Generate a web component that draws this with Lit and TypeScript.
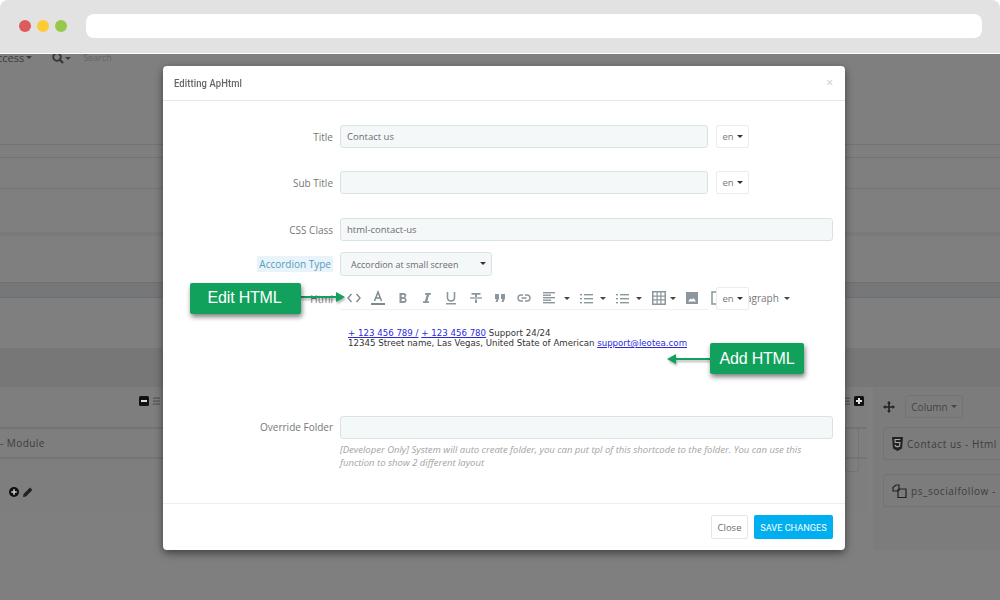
import { LitElement, html, css, svg } from "lit";
import { customElement } from "lit/decorators.js";

const ic = (w: number, h: number, body: unknown, cls = "") =>
  html`<svg class=${cls} width=${w} height=${h} viewBox="0 0 ${w} ${h}">${body}</svg>`;

const caret = html`<i class="caret"></i>`;

const tools = [
  ic(14, 12, svg`<path d="M4.500 2 1 6l3.500 4M9.500 2 13 6l-3.500 4" fill="none" stroke="#7d8a90" stroke-width="1.400"/>`),
  ic(16, 16, svg`<path d="M4.500 11 8 2l3.500 9M5.800 8h4.400" fill="none" stroke="#7d8a90" stroke-width="1.500"/><rect x="1" y="13" width="14" height="2" fill="#7d8a90"/>`),
  ic(10, 12, svg`<path d="M1.500 1H6c3 0 3 4.400.6 4.800C9.500 6 9.500 11 6 11H1.500zM3.700 3v2h2c1 0 1-2 0-2zM3.700 7v2h2.300c1.200 0 1.200-2 0-2z" fill="#8b979c" fill-rule="evenodd"/>`),
  ic(10, 12, svg`<path d="M3 1h6v1.800H7.200L5.300 9.200H7V11H1V9.200h1.800l1.900-6.400H3z" fill="#8b979c"/>`),
  ic(12, 14, svg`<path d="M2.500 1v5.500c0 4.500 7 4.500 7 0V1" fill="none" stroke="#8b979c" stroke-width="1.600"/><rect x="1" y="12" width="10" height="1.500" fill="#8b979c"/>`),
  ic(14, 12, svg`<path d="M1 6h12" stroke="#8b979c" stroke-width="1.300"/><path d="M2.500 1h9v1.800H8V5H6V2.800H2.500zM6 7.500h2V11H6z" fill="#8b979c"/>`),
  ic(12, 10, svg`<path d="M1 1h4v4.500L3.500 9H1.500l1-3H1zM7 1h4v4.500L9.500 9h-2l1-3H7z" fill="#8b979c"/>`),
  ic(14, 10, svg`<path d="M6 2H4a3 3 0 0 0 0 6h2M8 2h2a3 3 0 0 1 0 6H8M4.500 5h5" fill="none" stroke="#8b979c" stroke-width="1.400"/>`),
];

const lines = (xs: number[]) =>
  ic(12, 12, svg`${xs.map((w, i) => svg`<rect x="0" y=${i * 2.5} width=${w} height="1.400" fill="#8b979c"/>`)}`);

const listIcon = (x: number) =>
  ic(13, 11, svg`${[1, 5, 9].map((y) => svg`<rect x="0" y=${y} width="2" height="1.400" fill="#8b979c"/><rect x=${x} y=${y} width=${13 - x} height="1.400" fill="#8b979c"/>`)}`);

const grip = ic(7, 9, svg`${[0.5, 3.5, 6.5].map((y) => svg`<rect x="0" y=${y} width="7" height="1.200" fill="#555"/>`)}`);

@customElement("app-root")
export class AppRoot extends LitElement {
  static styles = css`
    :host {
      display: block;
      position: relative;
      width: 1000px;
      height: 600px;
      overflow: hidden;
      background: #ffffff;
      font-family: "Open Sans", "Liberation Sans", sans-serif;
    }
    .chrome {
      height: 53px;
      background: #e2e2e2;
      border-radius: 8px 8px 0 0;
      display: flex;
      align-items: center;
      padding: 0 18px 1px 19px;
      box-sizing: border-box;
      gap: 6px;
    }
    .dot { width: 12px; height: 12px; border-radius: 50%; }
    .red { background: #df5a5c; }
    .yellow { background: #fdcb33; }
    .green { background: #96c94b; }
    .url { flex: 1; height: 24px; background: #fff; border-radius: 8px; margin-left: 13px; }
    .page {
      margin-top: 1px;
      height: 546px;
      background: #7f7f7f;
      color: #3c3c3c;
      display: flex;
      flex-direction: column;
    }
    .nav {
      height: 90px;
      flex: none;
      display: flex;
      align-items: flex-start;
      font-size: 10px;
      box-sizing: border-box;
      overflow: hidden;
      white-space: nowrap;
    }
    .nav-access { margin: -3px 0 0 -10px; font-size: 11px; line-height: 13px; height: 13px; display: flex; align-items: center; gap: 2px; flex: none; }
    .nav-search { margin-left: 20px; display: flex; align-items: center; gap: 1px; height: 8px; flex: none; }
    .nav-text { margin-left: 12px; color: #666; line-height: 7px; font-size: 9px; }
    .caret {
      display: inline-block;
      width: 0; height: 0;
      border-left: 3.5px solid transparent;
      border-right: 3.5px solid transparent;
      border-top: 3.5px solid currentColor;
      flex: none;
    }
    .band { flex: none; border-top: 1px solid #737373; box-sizing: border-box; }
    .b1 { height: 13px; }
    .b2 { height: 31px; }
    .b3 { height: 44px; border-top-width: 1px; }
    .b4 { height: 50px; border-top: 4px solid #7a7a7a; }
    .b5 { height: 16px; background: #767779; border-top: 1px solid #707070; border-bottom: 1px solid #707070; }
    .b6 { height: 50px; border-top: none; }
    .b7 { height: 39px; background: #777777; border-top: none; }
    .builder {
      height: 163px;
      flex: none;
      display: flex;
      justify-content: space-between;
    }
    .left { width: 867px; height: 126px; box-sizing: border-box; background: #7e7e7e; display: flex; flex-direction: column; }
    .left-top { height: 40px; flex: none; display: flex; align-items: flex-end; padding: 0 3px 21px 139px; gap: 4px; box-sizing: border-box; }
    .spacer { flex: 1; }
    .mod {
      height: 32px; flex: none;
      border-top: 2px solid #747474; border-bottom: 2px solid #747474;
      box-sizing: border-box;
      font-size: 10px;
      display: flex; align-items: center;
      letter-spacing: .45px;
      justify-content: space-between;
    }
    .mod-side { width: 14px; height: 44px; align-self: flex-start; margin-top: -1px; border: 1px solid #747474; border-radius: 2px; box-sizing: border-box; margin-right: 8px; }
    .mod-tools { display: flex; gap: 4px; margin: 28px 0 0 9px; align-items: center; }
    .right {
      width: 127px;
      background: #7c7c7c;
      box-sizing: border-box;
      padding: 8px 0 0 10px;
    }
    .right-top { display: flex; align-items: center; gap: 10px; }
    .col-btn {
      width: 58px; height: 23px; box-sizing: border-box;
      border: 1px solid #737373; border-radius: 3px;
      font-size: 10px; color: #444;
      display: flex; align-items: center; justify-content: center; gap: 3px;
    }
    .card {
      height: 33px; width: 140px;
      margin-top: 9px;
      box-sizing: border-box;
      border: 1px solid #737373; border-radius: 3px;
      display: flex; align-items: center; gap: 4px;
      padding-left: 8px;
      font-size: 10px; letter-spacing: .55px;
      white-space: nowrap;
    }
    .card + .card { margin-top: 14px; }
    .bottom { flex: 1; }

    .modal {
      position: absolute;
      left: 163px; top: 66px;
      width: 682px; height: 484px;
      background: #fff;
      border-radius: 4px;
      box-shadow: 0 3px 9px rgba(0,0,0,.5);
      display: flex;
      flex-direction: column;
      color: #6c6c6c;
    }
    .head {
      height: 35px; flex: none;
      box-sizing: border-box;
      border-bottom: 1px solid #e8e8e8;
      display: flex; align-items: center; justify-content: space-between;
      padding: 0 12px 0 11px;
    }
    .head h4 { margin: 0; font: 500 11px Roboto, sans-serif; color: #666; letter-spacing: .1px; transform: scaleX(.86); transform-origin: left center; }
    .x { font-size: 12px; color: #c8c8c8; line-height: 1; }
    .body { flex: 1; padding-top: 24px; }
    .row {
      display: grid;
      grid-template-columns: 170px 1fr;
      column-gap: 7px;
      padding-right: 12px;
      align-items: center;
      position: relative;
    }
    .lab { text-align: right; font-size: 10px; color: #777; }
    .lab mark { background: #e8f4f9; color: #5b9bbd; padding: 1px 2px; }
    .inp {
      height: 23px; box-sizing: border-box;
      background: #f5f8f9;
      border: 1px solid #d8e3e6;
      border-radius: 3px;
      font-size: 9.5px; color: #6c6c6c;
      padding: 0 6px;
      display: flex; align-items: center;
    }
    .short { display: flex; gap: 8px; }
    .short .inp { width: 368px; flex: none; }
    .en {
      width: 33px; height: 23px; box-sizing: border-box;
      border: 1px solid #ececec; border-radius: 2px; background: #fff;
      font-size: 9.5px; color: #777;
      display: flex; align-items: center; justify-content: center; gap: 3px;
      flex: none;
    }
    .en .caret { color: #333; }
    .r2 { margin-top: 23px; }
    .r3 { margin-top: 24px; }
    .r4 { margin-top: 11px; }
    .sel { width: 152px; height: 24px; justify-content: space-between; padding-left: 10px; padding-right: 5px; font-size: 9px; }
    .sel .caret { color: #333; transform: translateY(-1px); }
    .r5 { margin-top: 11px; }
    .bar {
      height: 23px; width: 368px; box-sizing: border-box;
      border-bottom: 1px solid #f0f0f0;
      display: flex; align-items: center;
      font-size: 10px; color: #777;
      white-space: nowrap;
      padding-left: 2px;
    }
    .t { width: 24.3px; flex: none; display: flex; align-items: center; justify-content: center; }
    .t.w { width: 36.3px; justify-content: space-between; padding-right: 10px; box-sizing: border-box; }
    .t.first { margin-left: 7px; }
    .t.tbl { width: 28px; padding-right: 4px; }
    .t .caret { color: #444; }
    .para { display: flex; align-items: center; gap: 5px; width: 61px; justify-content: flex-end; flex: none; }
    .para .caret { color: #444; }
    .en-over { position: absolute; left: 553px; top: 0; }
    .content { margin-left: 185px; margin-top: 18px; font: 8.65px/10px "DejaVu Sans", sans-serif; color: #333; height: 88px; white-space: nowrap; }
    .content a { color: #2a2ae0; text-decoration: underline; }
    .r6 { align-items: start; }
    .r6 .lab { line-height: 23px; }
    .help { font-size: 9.5px; font-style: italic; color: #a3a3a3; line-height: 13px; margin-top: 4px; padding-right: 10px; }
    .foot {
      height: 47px; flex: none;
      box-sizing: border-box;
      border-top: 1px solid #eee;
      display: flex; justify-content: flex-end; align-items: flex-start;
      gap: 6px; padding: 11px 12px 0 0;
    }
    .btn {
      height: 24px; box-sizing: border-box; border-radius: 2px;
      font: 10px Roboto, sans-serif;
      display: flex; align-items: center; justify-content: center;
    }
    .close { width: 37px; border: 1px solid #e6e6e6; color: #6c6c6c; font-family: "Open Sans", sans-serif; font-size: 9.5px; }
    .save { width: 79px; background: #00aff0; color: #fff; font-size: 9.2px; }

    .note {
      position: absolute;
      background: #11a15c;
      color: #fff;
      font: 16px/1 "Liberation Sans", sans-serif;
      letter-spacing: -.2px;
      border-radius: 2px;
      box-shadow: 1px 3px 5px rgba(0,0,0,.5);
      display: flex; align-items: center; justify-content: center;
      box-sizing: border-box;
    }
    .n1 { left: 190px; top: 283px; width: 111px; height: 31px; padding: 0 2px 1px 0; }
    .n2 { left: 710px; top: 343px; width: 94px; height: 31px; }
    .arrow { position: absolute; filter: drop-shadow(1px 2px 1px rgba(0,0,0,.3)); }
    .a1 { left: 300px; top: 292px; }
    .a2 { left: 666px; top: 354px; }
  `;

  render() {
    return html`
      <div class="chrome">
        <div class="dot red"></div><div class="dot yellow"></div><div class="dot green"></div>
        <div class="url"></div>
      </div>
      <div class="page">
        <div class="nav">
          <div class="nav-access"><span>Access</span>${caret}</div>
          <div class="nav-search">
            ${ic(12, 12, svg`<circle cx="5" cy="5" r="3.800" fill="none" stroke="#333" stroke-width="1.800"/><path d="M8 8l3 3" stroke="#333" stroke-width="2"/>`)}${caret}
          </div>
          <div class="nav-text">Search</div>
        </div>
        <div class="band b1"></div>
        <div class="band b2"></div>
        <div class="band b3"></div>
        <div class="band b4"></div>
        <div class="band b5"></div>
        <div class="band b6"></div>
        <div class="band b7"></div>
        <div class="builder">
          <div class="left">
            <div class="left-top">
              ${ic(10, 10, svg`<rect width="10" height="10" rx="1.500" fill="#111"/><rect x="2" y="4" width="6" height="2" fill="#ddd"/>`)}
              ${grip}
              <div class="spacer"></div>
              ${grip}
              ${ic(10, 10, svg`<rect width="10" height="10" rx="1.500" fill="#111"/><path d="M5 2v6M2 5h6" stroke="#ddd" stroke-width="2"/>`)}
            </div>
            <div class="mod"><span>- Module</span><div class="mod-side"></div></div>
            <div class="mod-tools">
              ${ic(10, 10, svg`<circle cx="5" cy="5" r="5" fill="#111"/><path d="M5 2.200v5.600M2.200 5h5.600" stroke="#ccc" stroke-width="1.600"/>`)}
              ${ic(10, 10, svg`<path d="M0 10l.6-3L7 .6 9.400 3 3 9.400z" fill="#222"/>`)}
            </div>
          </div>
          <div class="right">
            <div class="right-top">
              ${ic(12, 12, svg`<path d="M6 0l2 2.500H6.800v2.700h2.700V4L12 6 9.500 8V6.800H6.800v2.700H8L6 12 4 9.500h1.200V6.800H2.500V8L0 6l2.500-2v1.200h2.700V2.500H4z" fill="#222"/>`)}
              <div class="col-btn">Column ${caret}</div>
            </div>
            <div class="card">
              ${ic(11, 14, svg`<path d="M0 0h11l-1 11.500L5.500 14 1 11.500z" fill="#222"/><path d="M8.300 2.500H3l.2 3h4.700l-.3 3.500-2.100.8-2.100-.8-.1-1.300" fill="none" stroke="#aaa" stroke-width="1.100"/>`)}
              Contact us - Html
            </div>
            <div class="card">
              ${ic(15, 14, svg`<path d="M1 3.500 4 1h3v3.500L5 7H1zM6 7.500 8 5h6v8.500H6z" fill="none" stroke="#222" stroke-width="1.200"/>`)}
              ps_socialfollow -
            </div>
          </div>
        </div>
        <div class="bottom"></div>
      </div>

      <div class="modal">
        <div class="head"><h4>Editting ApHtml</h4><span class="x">×</span></div>
        <div class="body">
          <div class="row">
            <div class="lab">Title</div>
            <div class="short"><div class="inp">Contact us</div><div class="en">en ${caret}</div></div>
          </div>
          <div class="row r2">
            <div class="lab">Sub Title</div>
            <div class="short"><div class="inp"></div><div class="en">en ${caret}</div></div>
          </div>
          <div class="row r3">
            <div class="lab">CSS Class</div>
            <div class="inp">html-contact-us</div>
          </div>
          <div class="row r4">
            <div class="lab"><mark>Accordion Type</mark></div>
            <div class="inp sel">Accordion at small screen ${caret}</div>
          </div>
          <div class="row r5">
            <div class="lab">Html</div>
            <div class="bar">
              ${tools.map((t) => html`<div class="t">${t}</div>`)}
              <div class="t w first">${lines([12, 8, 12, 8, 12])}${caret}</div>
              <div class="t w">${listIcon(4)}${caret}</div>
              <div class="t w">${listIcon(4)}${caret}</div>
              <div class="t w tbl">${ic(14, 14, svg`<path fill="#8b979c" fill-rule="evenodd" d="M0 0h14v14H0zM1.500 1.500v3h3v-3zm4.200 0v3h2.600v-3zm3.800 0v3h3v-3zM1.500 5.700v2.600h3V5.700zm4.200 0v2.600h2.600V5.700zm3.800 0v2.600h3V5.700zM1.500 9.500v3h3v-3zm4.200 0v3h2.600v-3zm3.800 0v3h3v-3z"/>`)}${caret}</div>
              <div class="t">${ic(12, 12, svg`<path fill="#8b979c" fill-rule="evenodd" d="M0 0h12v12H0zM2 9.500h8L7.500 6 6 7.500 4.500 6.500z"/>`)}</div>
              <div class="t">${ic(12, 14, svg`<path d="M1 1h7v12H1z" fill="none" stroke="#8b979c" stroke-width="1.500"/>`)}</div>
              <div class="para">Paragraph ${caret}</div>
            </div>
            <div class="en en-over">en ${caret}</div>
          </div>
          <div class="content">
            <div><a href="#">+ 123 456 789 /</a> <a href="#">+ 123 456 780</a> Support 24/24</div>
            <div>12345 Street name, Las Vegas, United State of American <a href="#">support@leotea.com</a></div>
          </div>
          <div class="row r6">
            <div class="lab">Override Folder</div>
            <div>
              <div class="inp"></div>
              <div class="help">[Developer Only] System will auto create folder, you can put tpl of this shortcode to the folder. You can use this function to show 2 different layout</div>
            </div>
          </div>
        </div>
        <div class="foot">
          <div class="btn close">Close</div>
          <div class="btn save">SAVE CHANGES</div>
        </div>
      </div>

      <svg class="arrow a1" width="46" height="10" viewBox="0 0 46 10"><path d="M0 4h36V0l9 5-9 5V6H0z" fill="#11a15c"/></svg>
      <svg class="arrow a2" width="46" height="10" viewBox="0 0 46 10"><path d="M45 4H10V0L1 5l9 5V6h35z" fill="#11a15c"/></svg>
      <div class="note n1">Edit HTML</div>
      <div class="note n2">Add HTML</div>
    `;
  }
}
